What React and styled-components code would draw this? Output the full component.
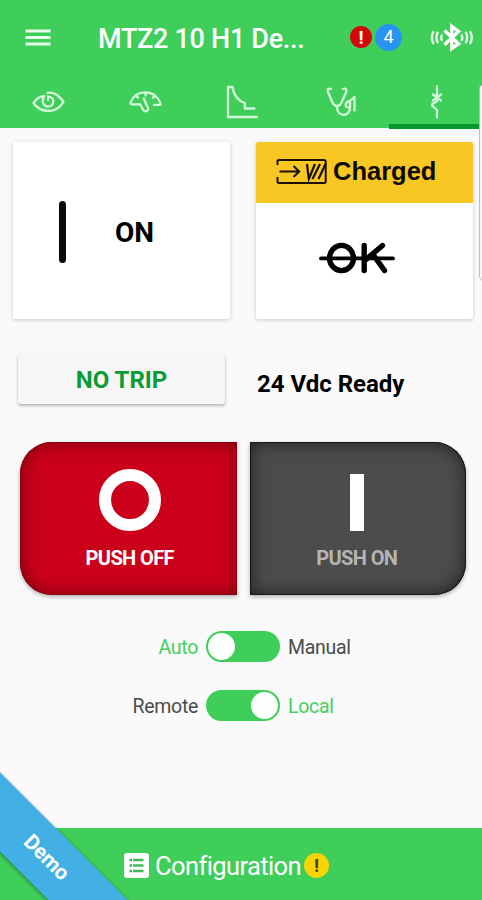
import React, { useState } from "react";
import styled, { createGlobalStyle } from "styled-components";

const GlobalStyle = createGlobalStyle`
  * {
    box-sizing: border-box;
  }
  body {
    margin: 0;
    background: #fafafa;
    font-family: Roboto, "Liberation Sans", sans-serif;
  }
  button {
    padding: 0;
    border: none;
    background: none;
    font-family: inherit;
  }
  svg {
    display: block;
    flex: none;
  }
`;

const Screen = styled.div`
  position: relative;
  display: flex;
  flex-direction: column;
  width: 482px;
  height: 900px;
  overflow: hidden;
  background: #fafafa;
`;

const Header = styled.header`
  height: 128px;
  background: #40ce5a;
  color: #fff;
`;

const TopBar = styled.div`
  display: flex;
  align-items: center;
  height: 76px;
  padding: 0 8px 0 25px;
`;

const Title = styled.h1`
  width: 208px;
  margin: 1px 44px 0 46px;
  font-size: 27px;
  font-weight: 500;
  line-height: 36px;
  letter-spacing: -0.3px;
  white-space: nowrap;
`;

const Badge = styled.span`
  display: flex;
  flex: none;
  align-items: center;
  justify-content: center;
  width: ${(props) => props.$size}px;
  height: ${(props) => props.$size}px;
  border-radius: 50%;
  background: ${(props) => props.$bg};
  color: ${(props) => props.$color || "#fff"};
  font-size: ${(props) => props.$font}px;
  font-weight: ${(props) => props.$weight || 400};
  line-height: 1;
`;

const Alerts = styled.div`
  display: flex;
  align-items: center;
  gap: 3px;
  margin-right: 28px;
  margin-top: -2px;
`;

const Tabs = styled.nav`
  display: grid;
  grid-template-columns: 97px 97px 98px 97px 91px;
  height: 52px;
`;

const Tab = styled.button`
  display: flex;
  align-items: center;
  justify-content: center;
  padding: 9px 0 5px ${(props) => props.$shift || 0}px;
  border-bottom: 5px solid ${(props) => (props.$active ? "#06982f" : "transparent")};
`;

const Main = styled.main`
  flex: 1;
  padding: 14px 9px 0 13px;
`;

const Cards = styled.div`
  display: grid;
  grid-template-columns: 217px 217px;
  gap: 26px;
`;

const Card = styled.section`
  display: flex;
  flex-direction: column;
  height: 177px;
  border-radius: 2px;
  overflow: hidden;
  background: #fff;
  box-shadow: 0 1px 4px rgba(0, 0, 0, 0.2);
`;

const PositionBody = styled.div`
  display: flex;
  flex: 1;
  align-items: center;
  gap: 49px;
  padding: 3px 0 0 46px;
  color: #000;
  font-size: 28px;
  font-weight: 700;
`;

const PositionBar = styled.span`
  width: 7px;
  height: 62px;
  border-radius: 4px;
  background: #0a0a0a;
`;

const CardBanner = styled.div`
  display: flex;
  align-items: center;
  gap: 5px;
  height: 61px;
  padding: 0 0 3px 20px;
  background: #f9c723;
  color: #0d0a02;
  font-family: "Liberation Sans", Arial, sans-serif;
  font-size: 25.5px;
  font-weight: 700;
`;

const CardBody = styled.div`
  display: flex;
  flex: 1;
  align-items: center;
  justify-content: center;
  padding: 0 16px 6px 0;
`;

const StatusRow = styled.div`
  display: flex;
  align-items: flex-start;
  margin: 35px 0 0 5px;
`;

const TripButton = styled.button`
  width: 207px;
  height: 50px;
  padding-top: 2px;
  border-radius: 2px;
  background: #f6f6f6;
  box-shadow: 0 2px 3px rgba(0, 0, 0, 0.25), 0 0 2px rgba(0, 0, 0, 0.1);
  color: #0c9a35;
  font-size: 24px;
  font-weight: 700;
`;

const Supply = styled.span`
  margin: 16px 0 0 32px;
  color: #000;
  font-size: 24px;
  font-weight: 700;
  line-height: 28px;
  white-space: nowrap;
`;

const PushRow = styled.div`
  display: flex;
  gap: 13px;
  margin: 38px 0 0 7px;
`;

const PushButton = styled.button`
  display: flex;
  flex-direction: column;
  align-items: center;
  width: 216.5px;
  height: 153px;
  padding-top: 27px;
  border-radius: ${(props) => (props.$off ? "32px 0 0 32px" : "0 32px 32px 0")};
  background: ${(props) => (props.$off ? "#cb001b" : "#4c4c4c")};
  box-shadow: inset 0 0 0 1px ${(props) => (props.$off ? "#8d0012" : "#191919")},
    inset 0 0 18px ${(props) => (props.$off ? "rgba(70, 0, 8, 0.65)" : "rgba(0, 0, 0, 0.65)")},
    0 2px 4px rgba(0, 0, 0, 0.3);
  color: ${(props) => (props.$off ? "#fff" : "#b4b4b4")};
  font-size: 20px;
  font-weight: 700;
  line-height: 24px;
`;

const OffMark = styled.span`
  width: 62px;
  height: 62px;
  margin: 0 0 15px 3px;
  border: 12.5px solid #fff;
  border-radius: 50%;
`;

const OnMark = styled.span`
  width: 14px;
  height: 57px;
  margin: 5px 1px 15px 0;
  background: #fff;
`;

const PushLabel = styled.span`
  margin-left: ${(props) => props.$shift}px;
  letter-spacing: -0.6px;
`;

const Switches = styled.div`
  display: grid;
  row-gap: 28px;
  margin-top: 36px;
`;

const SwitchRow = styled.div`
  display: grid;
  grid-template-columns: 185px 74px 1fr;
  column-gap: 8px;
  align-items: center;
  height: 31px;
  font-size: 19.5px;
  letter-spacing: -0.3px;
`;

const SwitchLabel = styled.span`
  padding-top: 3px;
  color: ${(props) => (props.$active ? "#43cf60" : "#4b4b4b")};
  text-align: ${(props) => props.$align || "left"};
  line-height: 24px;
`;

const Track = styled.button`
  display: flex;
  align-items: center;
  justify-content: ${(props) => (props.$right ? "flex-end" : "flex-start")};
  width: 74px;
  height: 31px;
  padding: 0 2px;
  border-radius: 16px;
  background: #3fce5a;
`;

const Knob = styled.span`
  width: 27px;
  height: 27px;
  border-radius: 50%;
  background: #fdfffd;
`;

const Footer = styled.footer`
  display: flex;
  align-items: center;
  height: 72px;
  padding: 3px 0 0 124px;
  background: #40ce5a;
  color: #fff;
  font-size: 25.5px;
`;

const FooterLabel = styled.span`
  width: 145px;
  margin: 1px 4px 0 6px;
  letter-spacing: -0.6px;
  white-space: nowrap;
`;

/* corner ribbon lying over the footer */
const Ribbon = styled.div`
  position: absolute;
  left: -79px;
  top: 829.5px;
  display: flex;
  align-items: center;
  justify-content: center;
  width: 250px;
  height: 56px;
  padding-bottom: 3px;
  background: #42b0e5;
  box-shadow: 0 1px 4px rgba(0, 0, 0, 0.4);
  color: #fff;
  font-size: 21px;
  font-weight: 700;
  letter-spacing: -0.2px;
  transform: rotate(45deg);
`;

const EdgePanel = styled.div`
  position: absolute;
  left: 479px;
  top: 84px;
  width: 10px;
  height: 197px;
  border: 1px solid #bdbfbd;
  border-radius: 5px;
  background: #f7f7f7;
`;

const MenuIcon = () => (
  <svg width="27" height="18" viewBox="0 0 27 18" stroke="#e6fbe9" strokeWidth="2.8">
    <path d="M.5 2h25M.5 8.5h25M.5 15h25" />
  </svg>
);

const BluetoothIcon = () => (
  <svg width="44" height="30" viewBox="0 0 44 30" fill="none" stroke="#e9fcec">
    <path d="M14.5 7.5 28.5 20.8 21.8 25.5v-22L28.5 8.5 14.5 21.8" stroke="#fff" strokeWidth="3.4" />
    <path
      d="M12.2 11.5q-2 3.2 0 6.4M8 8.8q-3.2 5.7 0 11.4M3.6 8.2q-3.6 6.4 0 12.8M31.3 11.5q2 3.2 0 6.4M35.6 8.8q3.2 5.7 0 11.4M40 8.2q3.6 6.4 0 12.8"
      strokeWidth="2.3"
    />
  </svg>
);

const tabIconProps = {
  fill: "none",
  stroke: "#d5f7d9",
  strokeWidth: 2.3,
  strokeLinecap: "round",
  strokeLinejoin: "round",
};

const EyeIcon = () => (
  <svg width="34" height="24" viewBox="0 0 34 24" {...tabIconProps}>
    <path d="M15.5 2.8Q21 2 25 5q4.500 3.500 6.500 7Q26 21 16 21 6.500 20.500 1.500 13 5.500 6.500 12.500 5.800" />
    <path d="M11.500 7.500c-1.800 4-.5 9 4.500 9 6 0 7.200-7.800 2-9.500l-2-.5v3.500" />
  </svg>
);

const GaugeIcon = () => (
  <svg width="34" height="24" viewBox="0 0 34 24" {...tabIconProps}>
    <path d="M10.5 14.300H3Q1 14 1.700 12.300C4 6 9.600 2.300 16.500 2.300S29.300 6.800 31.500 13.500q.3 1.300-1 1.300H25" />
    <path d="M14.800 8.500 18 16c2.500 2.500.8 5.300-1.600 5.300-3.200 0-2.400-5-5.900-7M16.700 3v2.500M8 6.500l1 1.200M25 6.500l-1 1.200" />
  </svg>
);

const CurveIcon = () => (
  <svg width="34" height="34" viewBox="0 0 34 34" {...tabIconProps}>
    <path d="M31 32H2V2h4.500c1 7.500 4 13 12.300 16v5.500h9.700" />
  </svg>
);

const StethoscopeIcon = () => (
  <svg width="32" height="32" viewBox="0 0 32 32" {...tabIconProps}>
    <path d="M5 3C2 2 .9 3.500 2.200 6.500L6.500 16.500Q8.200 20 11 20t4.500-3.500l4.500-10c1.200-3 0-4.500-3-3.500" />
    <path d="M11 20.500c0 11.500 13 10.500 13 1.500l-4.200-1.500c-.5-3 1.500-5 4.200-5.500v7.500M28.500 11v13.500M28.500 11 24 15" />
  </svg>
);

const BreakerIcon = () => (
  <svg width="14" height="34" viewBox="0 0 14 34" {...tabIconProps}>
    <path d="M7 1.500V16M3 9.500l8 6M11 9.500l-8 6M7 13.500v2.700l-4.300 2.500Q1.300 20 2.700 21.200L7 25v7.500" />
  </svg>
);

const SpringIcon = () => (
  <svg width="52" height="27" viewBox="0 0 52 27" fill="none" stroke="#171003" strokeWidth="2">
    <path d="M1.500 7V3.500Q1.500 2 3 2h45q1.700 0 1.700 1.500v20q0 1.500-1.700 1.500H3q-1.500 0-1.500-1.500V19" />
    <path d="M3.500 13.500h19.500M17.500 8l5.700 5.500-5.700 5.500" />
    <path d="m31 6 1.800 15L39 6M36.500 21 44 6M42.500 21l7-15" strokeWidth="2.2" />
  </svg>
);

const NotOkIcon = () => (
  <svg width="76" height="34" viewBox="0 0 76 34" fill="none" stroke="#000" strokeLinecap="round">
    <ellipse cx="22.5" cy="17" rx="12" ry="12.6" strokeWidth="5.4" />
    <path d="M45.200 4.500v25M63.500 4.500 47 18.500M54 13.500l11.500 16" strokeWidth="5.4" />
    <path d="M2 17.400h72" strokeWidth="3.8" />
  </svg>
);

const ListIcon = () => (
  <svg width="25" height="25" viewBox="0 0 25 25">
    <rect width="25" height="25" rx="3" fill="#fff" />
    <path d="M9 7h10.500M9 12.500h10.500M9 18h10.500M5.500 7H8M5.500 12.500H8M5.500 18H8" stroke="#3dbb54" strokeWidth="2.5" />
  </svg>
);

const tabs = [
  { id: "view", icon: <EyeIcon />, shift: 0 },
  { id: "meter", icon: <GaugeIcon />, shift: 0 },
  { id: "curve", icon: <CurveIcon />, shift: 0 },
  { id: "health", icon: <StethoscopeIcon />, shift: 3 },
  { id: "control", icon: <BreakerIcon />, shift: 5 },
];

const Toggle = ({ left, right, initial }) => {
  const [isRight, setIsRight] = useState(initial === "right");

  return (
    <SwitchRow>
      <SwitchLabel $align="right" $active={!isRight}>
        {left}
      </SwitchLabel>
      <Track $right={isRight} onClick={() => setIsRight(!isRight)}>
        <Knob />
      </Track>
      <SwitchLabel $active={isRight}>{right}</SwitchLabel>
    </SwitchRow>
  );
};

const App = () => {
  const [activeTab, setActiveTab] = useState("control");

  return (
    <>
      <GlobalStyle />
      <Screen>
        <Header>
          <TopBar>
            <MenuIcon />
            <Title>MTZ2 10 H1 De...</Title>
            <Alerts>
              <Badge $size={22} $bg="#d30808" $font={19} $weight={700}>
                !
              </Badge>
              <Badge $size={27} $bg="#2794f2" $font={18}>
                4
              </Badge>
            </Alerts>
            <BluetoothIcon />
          </TopBar>
          <Tabs>
            {tabs.map((tab) => (
              <Tab
                key={tab.id}
                $shift={tab.shift}
                $active={tab.id === activeTab}
                onClick={() => setActiveTab(tab.id)}
              >
                {tab.icon}
              </Tab>
            ))}
          </Tabs>
        </Header>

        <Main>
          <Cards>
            <Card>
              <PositionBody>
                <PositionBar />
                <span>ON</span>
              </PositionBody>
            </Card>
            <Card>
              <CardBanner>
                <SpringIcon />
                <span>Charged</span>
              </CardBanner>
              <CardBody>
                <NotOkIcon />
              </CardBody>
            </Card>
          </Cards>

          <StatusRow>
            <TripButton>NO TRIP</TripButton>
            <Supply>24 Vdc Ready</Supply>
          </StatusRow>

          <PushRow>
            <PushButton $off>
              <OffMark />
              <PushLabel $shift={3}>PUSH OFF</PushLabel>
            </PushButton>
            <PushButton>
              <OnMark />
              <PushLabel $shift={-2}>PUSH ON</PushLabel>
            </PushButton>
          </PushRow>

          <Switches>
            <Toggle left="Auto" right="Manual" initial="left" />
            <Toggle left="Remote" right="Local" initial="right" />
          </Switches>
        </Main>

        <Footer>
          <ListIcon />
          <FooterLabel>Configuration</FooterLabel>
          <Badge $size={25} $bg="#fbd503" $color="#4a3a00" $font={19} $weight={700}>
            !
          </Badge>
        </Footer>

        <Ribbon>Demo</Ribbon>
        <EdgePanel />
      </Screen>
    </>
  );
};

export default App;
